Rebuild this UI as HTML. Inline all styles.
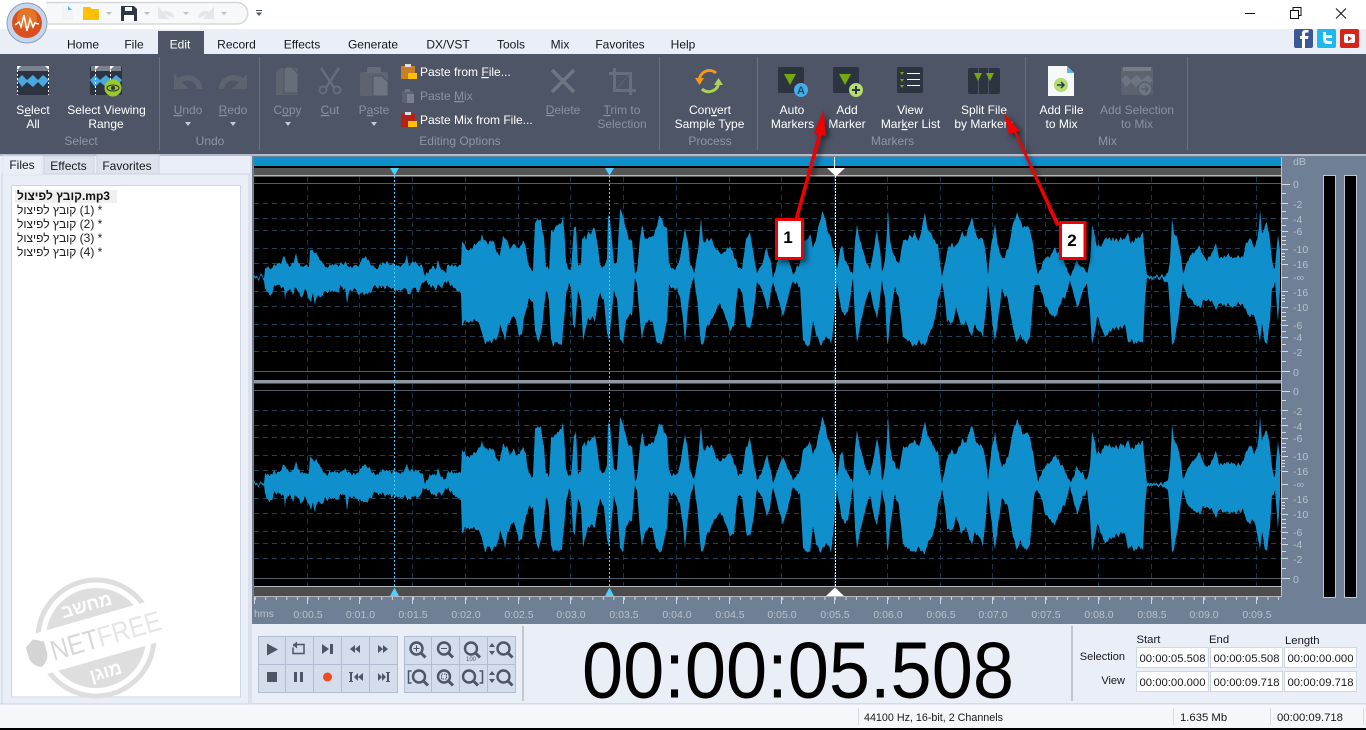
<!DOCTYPE html>
<html><head><meta charset="utf-8"><title>Audio Editor</title>
<style>
html,body{margin:0;padding:0;width:1366px;height:730px;overflow:hidden;background:#fff}
svg{position:absolute;left:0;top:0;display:block}
text{font-family:"Liberation Sans","Noto Sans CJK JP",sans-serif;font-size:12px;fill:#fff;text-anchor:middle}
.tab{fill:#14161c}
.dis{fill:#8b92a0}
.grp{fill:#8f96a4}
.l{text-anchor:start}
.r{text-anchor:end}
.u{text-decoration:underline}
.rul{font-size:10.5px;fill:#b9c1cc}
.db{font-size:10.5px;fill:#b9c1cc;text-anchor:start}
.blk{fill:#16181c;font-size:11.3px}
.sm{font-size:11.3px;fill:#16181c}
</style></head><body>
<svg width="1366" height="730" viewBox="0 0 1366 730" xmlns="http://www.w3.org/2000/svg">
<defs>
<filter id="jag" filterUnits="userSpaceOnUse" x="254" y="190" width="1027" height="380" color-interpolation-filters="sRGB">
<feTurbulence type="fractalNoise" baseFrequency="0.45 0.002" numOctaves="1" seed="3" result="n"/>
<feColorMatrix in="n" type="matrix" values="1 0 0 0 0  0 1 0 0 0  0 0 0 0 .5  0 0 0 0 1" result="m"/>
<feDisplacementMap in="SourceGraphic" in2="m" scale="10" xChannelSelector="B" yChannelSelector="R"/>
</filter>
<pattern id="tk" x="254.7" y="597" width="10.55" height="8" patternUnits="userSpaceOnUse"><rect width="1" height="3" fill="#cfd5de"/></pattern>
<path id="wv" fill="#0f8fcc" d="M254 277L254 276 264 276 265 268 268 267 272 267 275 265 280 265 284 258 287 262 290 265 294 262 296 254 298 262 302 265 305 267 309 266 310 250 313 253 318 255 322 262 325 268 330 266 335 264 340 266 345 262 350 266 355 268 360 262 365 258 370 262 375 268 380 265 385 263 390 265 395 264 400 266 405 264 407 255 409 264 414 263 418 264 422 267 425 275 428 272 431 268 436 267 438 262 441 269 444 273 446 273 447 264 452 266 457 266 461 265 462 241 466 249 470 249 476 246 480 240 482 233 484 240 488 243 492 241 495 247 498 253 500 254 503 236 507 241 510 247 513 243 517 248 520 246 523 240 526 247 527 255 529 268 533 269 535 222 538 219 541 222 544 240 546 267 549 269 551 232 555 228 558 225 562 220 563 217 565 240 566 262 569 270 571 268 574 228 576 226 578 266 581 263 582 240 584 235 586 240 588 234 592 232 595 227 597 240 600 265 604 266 607 258 608 215 610 218 612 240 614 263 617 263 620 210 623 218 626 228 629 240 632 238 635 274 637 270 640 240 642 226 645 240 649 237 653 236 656 228 659 218 662 217 664 225 667 228 669 266 674 268 677 268 680 258 683 240 685 225 688 245 690 263 694 274 698 250 700 230 701 218 703 243 708 240 712 238 716 250 720 255 724 252 730 245 734 255 738 267 742 267 746 240 750 233 753 250 757 273 762 265 767 248 770 260 773 276 778 262 783 250 788 262 793 273 800 263 803 243 806 240 810 235 813 247 816 240 820 222 822 210 825 218 829 235 834 248 837 270 840 248 842 245 845 260 848 267 853 276 855 240 857 223 860 240 862 247 866 262 870 267 874 250 877 230 880 250 882 273 885 262 887 230 888 208 890 240 893 255 895 257 899 265 903 240 907 240 912 236 915 233 919 240 922 228 925 215 928 228 932 237 935 243 938 245 942 277 945 262 947 250 952 244 956 248 962 233 966 236 969 225 972 218 975 232 979 238 983 240 986 255 988 273 992 240 995 225 998 245 1002 260 1008 250 1013 225 1017 212 1020 220 1023 228 1027 225 1030 230 1033 245 1035 260 1038 273 1041 268 1045 260 1050 255 1055 248 1060 256 1065 263 1070 276 1074 268 1077 260 1081 265 1087 273 1090 260 1092 225 1095 235 1097 247 1101 245 1105 238 1112 240 1118 240 1122 237 1125 240 1128 232 1131 243 1136 238 1140 236 1143 233 1145 260 1147 275 1155 277 1163 276 1168 273 1170 260 1172 218 1174 232 1178 240 1181 255 1183 273 1187 263 1192 255 1196 250 1200 245 1203 255 1207 260 1212 255 1216 243 1219 258 1225 256 1232 256 1238 258 1243 255 1246 245 1250 238 1254 245 1257 243 1259 225 1260 210 1262 235 1265 225 1267 222 1270 240 1272 262 1275 270 1277 245 1278 233 1280 250 1280 277ZM254 277L254 278 264 278 265 288 268 293 272 293 275 285 280 287 284 290 285 301 286 292 290 287 293 295 295 288 298 291 302 296 305 290 308 296 311 303 313 295 315 305 318 294 322 297 325 292 330 292 335 291 338 293 340 288 345 288 347 302 349 290 355 291 360 293 365 296 370 292 375 285 380 287 385 288 390 288 395 290 400 290 405 290 410 293 414 288 418 292 422 285 425 280 428 283 431 287 436 288 440 285 442 289 445 283 448 280 450 285 455 289 461 293 462 325 465 322 470 321 476 322 480 325 483 335 485 345 488 340 492 343 495 340 498 335 500 325 503 332 505 340 508 325 512 315 516 320 519 335 522 333 524 318 527 305 529 300 533 300 535 330 538 342 541 335 544 310 546 290 549 300 551 340 553 345 556 342 559 344 562 343 564 320 566 295 569 283 571 285 573 325 575 328 578 290 581 300 583 340 585 332 588 320 592 318 595 320 598 300 600 293 604 300 607 333 609 340 611 320 614 290 617 300 620 340 623 345 626 320 629 315 632 313 635 278 637 283 640 323 642 340 645 325 649 320 653 323 656 340 659 345 662 343 665 330 667 320 669 287 674 287 677 290 680 297 683 320 685 340 688 310 690 290 694 278 698 307 700 335 701 343 703 347 706 330 710 322 715 312 720 305 725 315 730 330 734 325 738 287 742 290 746 325 750 330 753 315 757 282 762 290 767 310 770 300 773 280 778 300 783 317 788 300 793 280 800 287 803 340 806 345 810 345 813 320 816 335 820 345 823 342 827 335 831 345 834 320 837 283 840 300 842 313 845 315 848 313 853 280 855 320 857 342 860 325 862 317 866 300 870 287 874 310 877 318 880 300 882 282 885 300 887 340 888 343 890 320 895 287 899 300 903 337 907 340 912 345 915 345 919 340 922 345 925 347 928 335 932 330 935 320 938 300 942 283 945 300 947 320 952 325 956 310 962 327 966 320 969 330 972 337 975 325 979 330 983 337 986 310 988 283 992 320 995 342 998 320 1002 290 1008 300 1013 330 1017 342 1020 335 1023 340 1027 343 1030 337 1033 300 1035 285 1038 283 1041 290 1045 307 1050 312 1055 318 1060 305 1065 297 1070 280 1074 295 1077 308 1081 295 1087 283 1090 310 1092 345 1095 330 1097 317 1101 325 1105 337 1112 330 1118 328 1122 327 1125 325 1128 342 1131 340 1136 343 1140 340 1143 343 1145 300 1147 278 1155 279 1163 279 1168 283 1170 310 1172 345 1174 342 1178 320 1181 295 1183 283 1187 297 1192 302 1196 305 1200 307 1203 300 1207 300 1212 303 1216 310 1219 303 1225 305 1232 306 1238 305 1243 303 1246 312 1250 317 1254 312 1257 327 1259 335 1260 343 1262 325 1265 343 1267 343 1270 320 1272 290 1275 283 1277 310 1278 320 1280 290 1280 277Z"/>
<g id="hg"><path fill="none" stroke="#1b4458" stroke-dasharray="5 4" d="M254 203.5H1281M254 218.5H1281M254 230.5H1281M254 248.5H1281M254 263.5H1281M254 291.5H1281M254 306.5H1281M254 324.5H1281M254 336.5H1281M254 351.5H1281"/><path stroke="#4d5d6c" d="M254 183.5H1281M254 371.5H1281"/></g>
<g id="dbt"><path stroke="#d8dde4" d="M1282 184.5H1290M1282 193.5H1286M1282 203.5H1288M1282 211.5H1286M1282 218.5H1288M1282 225.5H1286M1282 231.5H1288M1282 236.5H1286M1282 240.5H1286M1282 244.5H1286M1282 249.5H1288M1282 253.5H1285M1282 256.5H1285M1282 259.5H1285M1282 264.5H1288M1282 277.5H1288M1282 291.5H1288M1282 295.5H1285M1282 298.5H1285M1282 301.5H1285M1282 307.5H1288M1282 312.5H1286M1282 316.5H1286M1282 320.5H1286M1282 325.5H1288M1282 331.5H1286M1282 337.5H1288M1282 344.5H1286M1282 351.5H1288M1282 361.5H1286M1282 371.5H1290"/>
<text class="db" x="1293" y="188">0</text><text class="db" x="1293" y="208">-2</text><text class="db" x="1293" y="223">-4</text><text class="db" x="1293" y="235">-6</text><text class="db" x="1293" y="253">-10</text><text class="db" x="1293" y="268">-16</text><text class="db" x="1293" y="281">-∞</text><text class="db" x="1293" y="296">-16</text><text class="db" x="1293" y="311">-10</text><text class="db" x="1293" y="329">-6</text><text class="db" x="1293" y="341">-4</text><text class="db" x="1293" y="356">-2</text><text class="db" x="1293" y="376">0</text></g>
<g id="mag"><circle cx="0" cy="0" r="6" fill="none" stroke="#4d5566" stroke-width="2.400"/><path d="M4.5 4.5L9 9" stroke="#4d5566" stroke-width="3"/></g>
<path id="vud" fill="#4d5566" d="M0 -6L3 -2H-3ZM0 6L-3 2H3Z"/>
</defs>

<!-- chrome -->
<rect width="1366" height="29" fill="#fff"/>
<rect y="29" width="1366" height="25" fill="#eaeef6"/>
<rect y="54" width="1366" height="100" fill="#4d5566"/>
<rect y="154" width="1366" height="2" fill="#b4bccb"/>
<rect y="156" width="1366" height="548" fill="#eaeef6"/>
<rect y="703" width="1366" height="25" fill="#f5f7fb"/>
<rect y="703" width="1366" height="1.5" fill="#d4dae6"/>
<rect y="728" width="1366" height="2" fill="#000"/>

<!-- logo + quick access -->
<path d="M46 2.500H237a10.750 10.750 0 0 1 0 21.500H48" fill="#f7f8fa" stroke="#d6d8dc" stroke-width="1.500"/>
<circle cx="27" cy="23" r="20" fill="#c5d5ec" stroke="#8aa0bd"/>
<circle cx="27" cy="23" r="15" fill="#d9501e"/>
<circle cx="27" cy="18" r="10" fill="#f09030" opacity=".55"/>
<path d="M15 25L19 22 21 27 24 15 27 31 30 19 33 27 35 23 39 24" fill="none" stroke="#fff" stroke-width="1.500"/>
<path d="M62 6h7l4 4v10H62z" fill="#f2f3f5"/><path d="M68 6l4 4h-4z" fill="#5ab4e8"/>
<path d="M83 7h7l2 2h7v11H83z" fill="#ffc000"/>
<path d="M121 6h13l3 3v12h-16z" fill="#30364a"/><rect x="125" y="7" width="7" height="4" fill="#fff"/><rect x="124" y="15" width="10" height="6" fill="#fff"/>
<path d="M106 12l3 3 3-3zM144 12l3 3 3-3zM183 12l3 3 3-3zM221 12l3 3 3-3z" fill="#bcc0c6"/>
<path d="M159 9v9h8zM173 18a7 6 0 0 0-11-5" fill="#e4e6e9" stroke="#e4e6e9" stroke-width="2"/>
<path d="M213 9v9h-8zM199 18a7 6 0 0 1 11-5" fill="#e4e6e9" stroke="#e4e6e9" stroke-width="2"/>
<path d="M256 10h6v1h-6zM256 12.500h6l-3 3.500z" fill="#4d5566"/>

<!-- window controls -->
<path d="M1245 13.500H1255" stroke="#111"/>
<path d="M1290.500 10.500h8v8h-8zM1293 10v-2.500h8v8h-2.500" fill="none" stroke="#111"/>
<path d="M1336 8.500L1346 18.500M1346 8.500L1336 18.500" stroke="#111"/>
<rect x="1294" y="29" width="19" height="19" rx="2" fill="#3b5998"/>
<path d="M1305 48V39h3l.5-3H1305v-2c0-1 .5-1.500 1.500-1.500h2V30h-3c-2.500 0-3.500 1.500-3.500 3.500V36h-2v3h2v9z" fill="#fff"/>
<rect x="1317" y="29" width="19" height="19" rx="2" fill="#1eb8f0"/>
<path d="M1323 32v7c0 3 2 5 5 5h4v-3h-4c-1 0-2-1-2-2v-1h6v-3h-6v-3z" fill="#fff"/>
<rect x="1340" y="29" width="19" height="19" rx="2" fill="#d7241a"/>
<rect x="1344" y="34" width="11" height="9" rx="2" fill="#fff"/><path d="M1348 36l4 2.500-4 2.500z" fill="#d7241a"/>

<!-- tabs -->
<rect x="158" y="31" width="46" height="23" fill="#4d5566"/>
<text class="tab" x="83" y="48.500">Home</text><text class="tab" x="134" y="48.500">File</text><text x="180" y="48.500">Edit</text><text class="tab" x="236.500" y="48.500">Record</text><text class="tab" x="302" y="48.500">Effects</text><text class="tab" x="373" y="48.500">Generate</text><text class="tab" x="448" y="48.500">DX/VST</text><text class="tab" x="511" y="48.500">Tools</text><text class="tab" x="560" y="48.500">Mix</text><text class="tab" x="620" y="48.500">Favorites</text><text class="tab" x="683" y="48.500">Help</text>

<!-- ribbon separators -->
<path stroke="#6a7282" d="M159.500 57V150M259.500 57V150M659.500 57V150M757.500 57V150M1025.500 57V150M1187.500 57V150"/>

<!-- select icons -->
<rect x="17" y="66" width="32" height="29" rx="2" fill="#2c3442"/><rect x="18" y="66" width="30" height="5" fill="#7a8290"/>
<path d="M17 80L22 75 27 80 33 75 38 80 43 75 49 80 43 87 38 82 33 87 27 82 22 87Z" fill="#4aa8e0"/>
<path d="M17 66h4l-4 4zM49 66h-4l4 4z" fill="#fff"/><path d="M17.500 70V95M48.500 70V95" stroke="#fff" stroke-dasharray="2 2"/>
<rect x="90" y="66" width="32" height="29" rx="2" fill="#2c3442"/><rect x="91" y="66" width="30" height="5" fill="#7a8290"/>
<path d="M90 80L95 75 100 80 106 75 111 80 116 75 122 80 116 87 111 82 106 87 100 82 95 87Z" fill="#4aa8e0"/>
<path d="M95 66h4l-4 4zM110 66h4l-4 4z" fill="#fff"/><path d="M95.500 70V95M110.500 70V95" stroke="#fff" stroke-dasharray="2 2"/>
<circle cx="113" cy="88" r="8.500" fill="#9cc82a"/><ellipse cx="113" cy="88" rx="6" ry="3" fill="none" stroke="#2c3442"/><circle cx="113" cy="88" r="2" fill="#2c3442"/>
<text x="33" y="114">S<tspan class="u">e</tspan>lect</text><text x="33" y="128">All</text>
<text x="106.500" y="114">Select Viewing</text><text x="106" y="128">Range</text>
<text class="grp" x="81" y="145">Select</text>

<!-- undo/redo -->
<path d="M174 74V89H189Z" fill="#5d6470"/><path d="M199.500 89A12 11 0 0 0 179 81" fill="none" stroke="#5d6470" stroke-width="5.500"/>
<path d="M247 74V89H232Z" fill="#5d6470"/><path d="M221.500 89A12 11 0 0 1 242 81" fill="none" stroke="#5d6470" stroke-width="5.500"/>
<text class="dis" x="188" y="114"><tspan class="u">U</tspan>ndo</text><text class="dis" x="233" y="114"><tspan class="u">R</tspan>edo</text>
<path d="M185 122h6l-3 4zM230 122h6l-3 4zM285 122h6l-3 4zM371 122h6l-3 4z" fill="#c6cad2"/>
<text class="grp" x="210" y="145">Undo</text>

<!-- copy cut paste -->
<path d="M280 68h8l10 0v2l0 25h-22V72z" fill="#5d6470"/><path d="M286 67h6l6 7v19h-14V69z" fill="#676e7b" stroke="#4d5566"/>
<path d="M321 68l16 24M339 68l-16 24" stroke="#666d7a" stroke-width="2.500"/><circle cx="323" cy="90" r="3.500" fill="#4d5566" stroke="#666d7a" stroke-width="2"/><circle cx="337" cy="90" r="3.500" fill="#4d5566" stroke="#666d7a" stroke-width="2"/>
<rect x="360" y="72" width="28" height="24" rx="2" fill="#5d6470"/><path d="M367 73v-4a2 2 0 0 1 2-2h10a2 2 0 0 1 2 2v4z" fill="#666d7a"/><path d="M373 76h9l6 6v14h-15z" fill="#6e7582" stroke="#4d5566"/>
<text class="dis" x="287.500" y="114">C<tspan class="u">o</tspan>py</text><text class="dis" x="330" y="114"><tspan class="u">C</tspan>ut</text><text class="dis" x="374" y="114">P<tspan class="u">a</tspan>ste</text>
<text class="grp" x="460" y="145">Editing Options</text>

<!-- paste options -->
<rect x="401" y="66" width="14" height="13" fill="#c58028"/><rect x="405" y="64" width="6" height="3" fill="#e0e0e0"/><rect x="408" y="73" width="9" height="6" fill="#ffc000"/>
<rect x="402" y="91" width="11" height="12" fill="#5d6470"/><rect x="405" y="89" width="5" height="3" fill="#6e7582"/><rect x="407" y="94" width="7" height="9" fill="#7a808c"/>
<rect x="401" y="114" width="14" height="13" fill="#b8201a"/><rect x="405" y="112" width="6" height="3" fill="#e0e0e0"/><rect x="408" y="121" width="9" height="6" fill="#ffc000"/>
<text class="l" x="420" y="76">Paste from <tspan class="u">F</tspan>ile...</text>
<text class="l dis" x="420" y="100">Paste <tspan class="u">M</tspan>ix</text>
<text class="l" x="420" y="124">Paste Mix from File...</text>

<!-- delete/trim -->
<path d="M552 70L574 92M574 70L552 92" stroke="#6f7683" stroke-width="3.500"/>
<path d="M609 73.500H630.500V95M614.500 68V90.500H636" fill="none" stroke="#686f7c" stroke-width="3"/><path d="M630 74L615 90" stroke="#5d6470"/>
<text class="dis" x="563" y="114"><tspan class="u">D</tspan>elete</text><text class="dis" x="622" y="114"><tspan class="u">T</tspan>rim to</text><text class="dis" x="622" y="128">Selection</text>

<!-- convert -->
<path d="M699.500 79A10 10 0 0 1 716 73" fill="none" stroke="#f59a18" stroke-width="3"/><path d="M695 78h9l-4.500 7z" fill="#f59a18"/>
<path d="M718.500 84A10 10 0 0 1 702 89" fill="none" stroke="#a9d45c" stroke-width="3"/><path d="M714 85h9l-4.500-7z" fill="#a9d45c"/>
<text x="710" y="114">Con<tspan class="u">v</tspan>ert</text><text x="709.500" y="128">Sample Type</text>
<text class="grp" x="710" y="145">Process</text>

<!-- markers -->
<rect x="778" y="67" width="26" height="26" rx="2" fill="#2c3442"/><path d="M784 74h12l-6 11z" fill="#74a80e"/><circle cx="801" cy="90" r="7" fill="#45ade8"/><text x="801" y="94" style="font-size:11px;font-weight:bold;fill:#1a4a6e">A</text>
<rect x="833" y="67" width="26" height="26" rx="2" fill="#2c3442"/><path d="M839 74h12l-6 11z" fill="#74a80e"/><circle cx="856" cy="90" r="7" fill="#b4dc70"/><path d="M852 90h8M856 86v8" stroke="#2c3442" stroke-width="2"/>
<rect x="897" y="67" width="26" height="26" rx="2" fill="#2c3442"/><path d="M900 72h4l-2 3zM900 79h4l-2 3zM900 85h4l-2 3z" fill="#74a80e"/><path d="M907 73.500h13M907 79.500h13M907 85.500h13" stroke="#fff"/>
<path d="M968 70a2 2 0 0 1 2-2h8v26h-8a2 2 0 0 1-2-2zM979 68h9v26h-9zM989 68h9a2 2 0 0 1 2 2v22a2 2 0 0 1-2 2h-9z" fill="#2c3442"/><path d="M974 73h8l-4 8zM986 73h8l-4 8z" fill="#74a80e"/>
<text x="792" y="114">Auto</text><text x="792.500" y="128">Markers</text><text x="847" y="114">Add</text><text x="847" y="128">Marker</text>
<text x="910" y="114">View</text><text x="910.500" y="128">Mar<tspan class="u">k</tspan>er List</text>
<text x="984" y="114">Split File</text><text x="984" y="128">by Markers</text>
<text class="grp" x="892.500" y="145">Markers</text>

<!-- mix -->
<path d="M1048 66h19l7 7v23h-26z" fill="#f7f8fa"/><path d="M1067 66l7 7h-7z" fill="#5ab4e8"/><circle cx="1061" cy="85" r="7" fill="#b4dc70"/><path d="M1057 85h6M1061 82l3 3-3 3" stroke="#2c3442" stroke-width="1.500" fill="none"/>
<rect x="1121" y="67" width="32" height="28" rx="2" fill="#5d6470"/><rect x="1123" y="67" width="28" height="4" fill="#767d88"/><path d="M1121 80l5-5 5 5 6-5 5 5 6-5 5 5-6 7-5-5-6 5-5-5-5 5z" fill="#6e7582"/><circle cx="1145" cy="89" r="7" fill="#6e7582" stroke="#4d5566"/><path d="M1141 89h7M1145 86l3 3-3 3" stroke="#4d5566" fill="none"/>
<text x="1061.500" y="114">Add File</text><text x="1061.500" y="128">to Mix</text>
<text class="dis" x="1137" y="114">Add Selection</text><text class="dis" x="1137" y="128">to Mix</text>
<text class="grp" x="1107.500" y="145">Mix</text>

<!-- left panel -->
<rect x="250" y="156" width="2" height="548" fill="#dbe0ea"/>
<rect x="2" y="174" width="247" height="530" fill="#eaeef6" stroke="#ccd3e0"/>
<path d="M44 174V156h50v18zM97 174V155h62v19z" fill="#dde3ee" stroke="#ccd3e0"/>
<path d="M3 174V156h39v19H3z" fill="#eaeef6" stroke="#dfe4ee"/>
<text x="22" y="169" style="font-size:12px;fill:#16181c">Files</text><text x="68.500" y="170" style="font-size:12px;fill:#16181c">Effects</text><text x="127" y="170" style="font-size:12px;fill:#16181c">Favorites</text>
<rect x="11.500" y="185.500" width="229" height="511.500" fill="#fff" stroke="#cdd6e6"/>
<rect x="15" y="190" width="102" height="13" fill="#f0f0f0"/>
<text class="l" x="17" y="200" style="fill:#111;font-weight:bold;font-size:12px">קובץ לפיצול.mp3</text>
<text class="l" x="17" y="214" style="fill:#222">קובץ לפיצול&lrm; (1) *</text>
<text class="l" x="17" y="228" style="fill:#222">קובץ לפיצול&lrm; (2) *</text>
<text class="l" x="17" y="242" style="fill:#222">קובץ לפיצול&lrm; (3) *</text>
<text class="l" x="17" y="256" style="fill:#222">קובץ לפיצול&lrm; (4) *</text>

<!-- watermark -->
<g transform="rotate(-16 96 638)">
<circle cx="96" cy="638" r="58" fill="none" stroke="#dedede" stroke-width="5"/>
<path d="M50.600 617A50 50 0 0 1 141.400 617ZM50.600 659A50 50 0 0 0 141.400 659Z" fill="#dedede"/>
<rect x="30" y="617" width="134" height="42" fill="#fff"/>
<text x="96" y="610" style="font-size:18px;font-weight:bold;fill:#fff">מחשב</text>
<text x="96" y="679" style="font-size:18px;font-weight:bold;fill:#fff">מוגן</text>
<text class="l" x="49" y="648" textLength="114" lengthAdjust="spacingAndGlyphs" style="font-size:28px;fill:#d8d8d8">NET<tspan style="fill:#e6e6e6">FREE</tspan></text>
<path d="M26 628l9-6 10 5v11c0 6-5 11-9 13-6-2-10-7-10-13z" fill="#d4d4d4"/>
</g>

<!-- wave panel -->
<rect x="252" y="156" width="1114" height="468" fill="#6f7f96"/>
<rect x="254" y="157" width="1027" height="429" fill="#000"/>
<rect x="254" y="157" width="1027" height="9" fill="#0f8fcc"/>
<rect x="254" y="168" width="1027" height="7" fill="#555"/>
<rect x="254" y="175" width="1027" height="1.500" fill="#b8b8b8"/>
<path stroke="#123a4e" stroke-dasharray="5 4" d="M307.500 177V586M359.500 177V586M412.500 177V586M465.500 177V586M518.500 177V586M570.500 177V586M623.500 177V586M676.500 177V586M729.500 177V586M781.500 177V586M834.500 177V586M887.500 177V586M940.500 177V586M992.500 177V586M1045.500 177V586M1098.500 177V586M1151.500 177V586M1203.500 177V586M1256.500 177V586"/>
<use href="#hg"/><use href="#hg" y="207"/>
<g filter="url(#jag)"><use href="#wv"/><use href="#wv" y="207"/></g>
<rect x="254" y="380" width="1027" height="3.500" fill="#9098a4"/>
<rect x="254" y="586" width="1027" height="10" fill="#4d4d4d"/>
<path d="M254 586.500H1281M254 596.500H1282" stroke="#b4b8bd"/>
<path d="M1281.500 157V597" stroke="#b8c0cc"/>
<!-- markers -->
<path d="M394.500 176V586M609.500 176V586" stroke="#4dd0ff" stroke-dasharray="2 2"/>
<path d="M835.500 176V586" stroke="#fff" stroke-dasharray="2 1"/>
<path d="M834.500 157V168" stroke="#fff"/>
<path d="M390 168h9l-4.500 7.500zM605 168h9l-4.500 7.500z" fill="#4dd0ff"/>
<path d="M827 168h18l-9 8.500z" fill="#fff"/>
<path d="M390 596h9l-4.500-8.500zM605 596h9l-4.500-8.500z" fill="#4dd0ff"/>
<path d="M826 596h18l-9-8.500z" fill="#fff"/>
<!-- db -->
<use href="#dbt"/><use href="#dbt" y="207"/>
<text class="db" x="1293" y="165">dB</text>
<rect x="1323.500" y="175.500" width="12" height="422" fill="#000" stroke="#c0c4cc"/>
<rect x="1344.500" y="175.500" width="12" height="422" fill="#000" stroke="#c0c4cc"/>
<!-- ruler -->
<rect x="254" y="597" width="1027" height="3" fill="url(#tk)"/>
<path stroke="#cfd5de" d="M254.500 597V604M307.500 597V604M359.500 597V604M412.500 597V604M465.500 597V604M518.500 597V604M570.500 597V604M623.500 597V604M676.500 597V604M729.500 597V604M781.500 597V604M834.500 597V604M887.500 597V604M940.500 597V604M992.500 597V604M1045.500 597V604M1098.500 597V604M1151.500 597V604M1203.500 597V604M1256.500 597V604"/>
<text class="rul l" x="254" y="617">hms</text>
<text class="rul" x="308" y="618">0:00.5</text><text class="rul" x="360.500" y="618">0:01.0</text><text class="rul" x="413" y="618">0:01.5</text><text class="rul" x="466" y="618">0:02.0</text><text class="rul" x="519" y="618">0:02.5</text><text class="rul" x="571" y="618">0:03.0</text><text class="rul" x="624" y="618">0:03.5</text><text class="rul" x="677" y="618">0:04.0</text><text class="rul" x="730" y="618">0:04.5</text><text class="rul" x="782" y="618">0:05.0</text><text class="rul" x="835" y="618">0:05.5</text><text class="rul" x="888" y="618">0:06.0</text><text class="rul" x="941" y="618">0:06.5</text><text class="rul" x="993" y="618">0:07.0</text><text class="rul" x="1046" y="618">0:07.5</text><text class="rul" x="1099" y="618">0:08.0</text><text class="rul" x="1152" y="618">0:08.5</text><text class="rul" x="1204" y="618">0:09.0</text><text class="rul" x="1257" y="618">0:09.5</text>

<!-- transport -->
<rect x="258.500" y="636.500" width="139" height="56" fill="#d3ddec" stroke="#b0bdd3"/>
<rect x="404.500" y="636.500" width="111" height="56" fill="#d3ddec" stroke="#b0bdd3"/>
<path stroke="#b0bdd3" d="M258 664.500H398M285.500 637V692M313.500 637V692M341.500 637V692M369.500 637V692M404 664.500H516M431.500 637V692M459.500 637V692M487.500 637V692"/>
<g fill="#4d5566">
<path d="M267 643.500l11 6-11 6z"/>
<path d="M322 644l7 5-7 5zM330 644h3v10h-3z"/>
<path d="M350 649l5-4v8zM355 649l5-4v8z"/><path d="M388 649l-5-4v8zM383 649l-5-4v8z"/>
<rect x="267" y="672" width="10" height="10"/><rect x="294" y="672" width="3" height="10"/><rect x="300" y="672" width="3" height="10"/>
<path d="M349 672h4v1h-1v8h1v1h-4v-1h1v-8h-1zM358 677l5-4v8zM354 677l4-4v8z"/>
<path d="M378 673l4 4-4 4zM382 673l4 4-4 4zM386 672h4v1h-1v8h1v1h-4v-1h1v-8h-1z"/>
</g>
<path d="M294 646.500v-2h10v9h-11v-6" fill="none" stroke="#4d5566" stroke-width="1.500"/><path d="M297 641.500v7l-4-3.500z" fill="#4d5566"/>
<circle cx="327.500" cy="677" r="4.500" fill="#f44a22"/>
<use href="#mag" x="416.500" y="648.500"/><path d="M413.500 648.500h6M416.500 645.500v6" stroke="#4d5566"/>
<use href="#mag" x="444" y="648.500"/><path d="M441 648.500h6" stroke="#4d5566"/>
<use href="#mag" x="471" y="648.500"/><text x="471" y="661" style="font-size:6px;fill:#4d5566">100</text>
<use href="#vud" x="492" y="649"/><use href="#mag" x="503.500" y="648.500"/>
<path d="M411.500 671h-3v12h3" fill="none" stroke="#4d5566" stroke-width="1.500"/><use href="#mag" x="419" y="676.500"/>
<use href="#mag" x="444" y="676.500"/><rect x="441.500" y="674" width="5" height="5" fill="none" stroke="#4d5566" stroke-dasharray="1.500 1"/>
<use href="#mag" x="469" y="676.500"/><path d="M479.500 671h3v12h-3" fill="none" stroke="#4d5566" stroke-width="1.500"/>
<use href="#vud" x="492" y="677"/><use href="#mag" x="503.500" y="676.500"/>

<!-- big time -->
<path d="M523 626V701M1072 626V701" stroke="#9aa0aa"/>
<text x="582" y="697.500" textLength="432" lengthAdjust="spacingAndGlyphs" style="text-anchor:start;font-size:80px;fill:#000">00:00:05.508</text>

<!-- selection table -->
<text class="l blk" x="1136.500" y="643">Start</text><text class="l blk" x="1209" y="643">End</text><text class="l blk" x="1285" y="644">Length</text>
<text class="r blk" x="1125" y="660" style="font-size:11px">Selection</text><text class="r blk" x="1125" y="684" style="font-size:11px">View</text>
<g fill="#fff" stroke="#ced7e6"><rect x="1136.500" y="647.500" width="72" height="20"/><rect x="1210.500" y="647.500" width="72" height="20"/><rect x="1284.500" y="647.500" width="72" height="20"/><rect x="1136.500" y="671.500" width="72" height="20"/><rect x="1210.500" y="671.500" width="72" height="20"/><rect x="1284.500" y="671.500" width="72" height="20"/></g>
<text class="sm" x="1172.500" y="662">00:00:05.508</text><text class="sm" x="1246.500" y="662">00:00:05.508</text><text class="sm" x="1320.500" y="662">00:00:00.000</text>
<text class="sm" x="1172.500" y="686">00:00:00.000</text><text class="sm" x="1246.500" y="686">00:00:09.718</text><text class="sm" x="1320.500" y="686">00:00:09.718</text>

<!-- status -->
<path d="M858.500 708V725M1173.500 708V725M1270.500 708V725M1363.500 708V725" stroke="#d4dae6"/>
<text class="l sm" x="864" y="721" textLength="139" lengthAdjust="spacingAndGlyphs">44100 Hz, 16-bit, 2 Channels</text><text class="l sm" x="1180" y="721">1.635 Mb</text><text class="l sm" x="1277" y="721">00:00:09.718</text>

<!-- annotations -->
<g style="filter:drop-shadow(3px 3px 3px rgba(0,0,0,.55))">
<g fill="#f00000">
<path d="M794.500 219L818 134 814 133 823.500 110 826 136 821.500 135 798 220Z"/>
<path d="M1056 226L1014 132 1009 135 1004 113 1020 131 1016 131 1060 225Z"/>
</g>
<rect x="776.500" y="219.500" width="26" height="39" fill="#fff" stroke="#f00000" stroke-width="3"/>
<rect x="1060.500" y="222.500" width="24.500" height="36" fill="#fff" stroke="#f00000" stroke-width="3"/>
</g>
<text x="788" y="243" style="font-size:17px;font-weight:bold;fill:#000">1</text>
<text x="1072" y="246" style="font-size:17px;font-weight:bold;fill:#000">2</text>
</svg>
</body></html>
